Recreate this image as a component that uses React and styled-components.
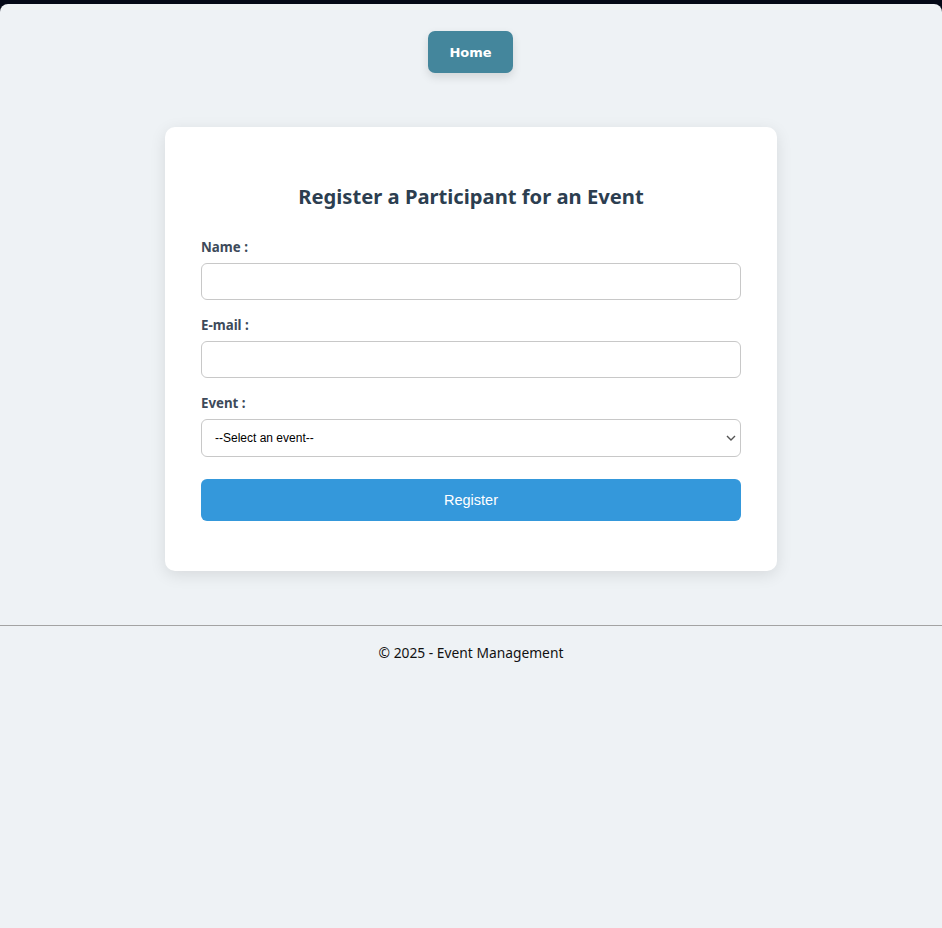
import React from 'react'
import styled, { createGlobalStyle } from 'styled-components'

const GlobalStyle = createGlobalStyle`
    html, body {
        margin: 0;
        padding: 0;
        background: #030817;
    }
    * {
        box-sizing: border-box;
    }
`

const chevron = encodeURIComponent(
    "<svg xmlns='http://www.w3.org/2000/svg' width='10' height='6' viewBox='0 0 10 6'><path d='M1 1l4 4 4-4' fill='none' stroke='#555' stroke-width='1.4'/></svg>"
)

const Page = styled.div`
    margin-top: 4px;
    min-height: 924px;
    background: #eef2f5;
    border-radius: 8px 8px 0 0;
    font-family: 'Noto Sans', 'Open Sans', sans-serif;
    display: flex;
    flex-direction: column;
    align-items: center;
`

const Nav = styled.nav`
    padding-top: 27px;
    display: flex;
    justify-content: center;
    margin-right: 1px;
`

const HomeLink = styled.a`
    display: flex;
    align-items: center;
    justify-content: center;
    width: 85px;
    height: 42px;
    background: #44869c;
    color: #fff;
    border-radius: 7px;
    font-family: 'DejaVu Sans', Verdana, sans-serif;
    font-weight: bold;
    font-size: 13px;
    text-decoration: none;
    box-shadow: 0 4px 10px rgba(0, 0, 0, 0.12);
    cursor: pointer;
`

const Card = styled.main`
    margin-top: 54px;
    width: 612px;
    background: #fff;
    border-radius: 10px;
    padding: 36px 36px 50px;
    box-shadow: 0 4px 16px rgba(0, 0, 0, 0.1);
`

const Titulo = styled.h2`
    margin: 19px 0 28px;
    text-align: center;
    color: #2c3e50;
    font-size: 20.2px;
    font-weight: 700;
    line-height: 28px;
`

const Form = styled.form`
    display: flex;
    flex-direction: column;
`

const Label = styled.label`
    color: #3d4a5a;
    font-weight: 700;
    font-size: 13.3px;
    line-height: 18px;
    margin-bottom: 7px;
`

const Input = styled.input`
    height: 37px;
    border: 1px solid #c8c8c8;
    border-radius: 6px;
    padding: 0 12px;
    margin-bottom: 16px;
    font-size: 14px;
`

const Select = styled.select`
    appearance: none;
    height: 38px;
    border: 1px solid #c8c8c8;
    border-radius: 6px;
    padding: 0 10px 0 13px;
    background: #fff url("data:image/svg+xml,${chevron}") no-repeat right 4px center;
    font-family: 'Liberation Sans', Arial, sans-serif;
    font-size: 12px;
    color: #000;
`

const Botao = styled.button`
    margin-top: 22px;
    height: 42px;
    border: none;
    border-radius: 6px;
    background: #3498db;
    color: #fff;
    font-family: 'Liberation Sans', Arial, sans-serif;
    font-size: 14.5px;
    cursor: pointer;
`

const Footer = styled.footer`
    margin-top: 54px;
    width: 100%;
    border-top: 1px solid #a3a3a3;
    padding-top: 17px;
    text-align: center;
    font-size: 13.8px;
    line-height: 19px;
    color: #111;
`

class App extends React.Component {
    render() {
        return (
            <>
                <GlobalStyle />
                <Page>
                    <Nav>
                        <HomeLink>Home</HomeLink>
                    </Nav>
                    <Card>
                        <Titulo>Register a Participant for an Event</Titulo>
                        <Form onSubmit={e => e.preventDefault()}>
                            <Label htmlFor='name'>Name :</Label>
                            <Input id='name' type='text' />
                            <Label htmlFor='email'>E-mail :</Label>
                            <Input id='email' type='email' />
                            <Label htmlFor='event'>Event :</Label>
                            <Select id='event' defaultValue=''>
                                <option value=''>--Select an event--</option>
                            </Select>
                            <Botao type='submit'>Register</Botao>
                        </Form>
                    </Card>
                    <Footer>© 2025 - Event Management</Footer>
                </Page>
            </>
        )
    }
}

export default App
